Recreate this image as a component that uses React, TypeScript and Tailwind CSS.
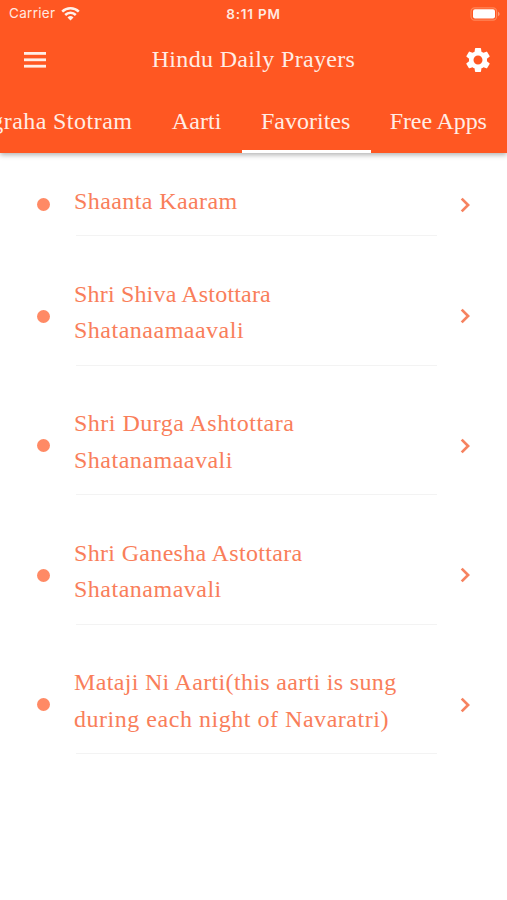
import React from "react";
import { MdSettings } from "react-icons/md";

const tabs = [
  { label: "Navagraha Stotram", tracking: "tracking-[0.5px] [word-spacing:-0.5px]", active: false },
  { label: "Aarti", tracking: "tracking-[0.1px]", active: false },
  { label: "Favorites", tracking: "tracking-[0px]", active: true },
  { label: "Free Apps", tracking: "tracking-[-0.1px]", active: false },
];

const prayers = [
  [{ text: "Shaanta Kaaram", tracking: "tracking-[0.4px]" }],
  [
    { text: "Shri Shiva Astottara", tracking: "tracking-[0.18px]" },
    { text: "Shatanaamaavali", tracking: "tracking-[0.5px]" },
  ],
  [
    { text: "Shri Durga Ashtottara", tracking: "tracking-[0.48px]" },
    { text: "Shatanamaavali", tracking: "tracking-[0.5px]" },
  ],
  [
    { text: "Shri Ganesha Astottara", tracking: "tracking-[0.33px]" },
    { text: "Shatanamavali", tracking: "tracking-[0.5px]" },
  ],
  [
    { text: "Mataji Ni Aarti(this aarti is sung", tracking: "tracking-[0.33px]" },
    { text: "during each night of Navaratri)", tracking: "tracking-[0.53px]" },
  ],
];

const StatusBar = () => {
  return (
    <div className="grid h-[28px] grid-cols-3 items-center pl-[9px] pr-[7px] font-['Inter',sans-serif] text-[#ffe9e0]">
      <div className="-mt-px flex items-center gap-[6px]">
        <span className="text-[13.5px] tracking-[0.3px]">Carrier</span>
        <svg width="19" height="14" viewBox="0 0 19 14" fill="none" stroke="#fff1ea" strokeWidth="2.5">
          <path d="M1.2 4.7a11.8 11.8 0 0 1 16.6 0" />
          <path d="M4.2 8a7.5 7.5 0 0 1 10.6 0" />
          <path d="M9.5 13.4 6.5 10.4a4.3 4.3 0 0 1 6 0Z" fill="#fff1ea" stroke="none" />
        </svg>
      </div>
      <span className="-ml-[2px] text-center text-[13.5px] font-semibold tracking-[0.8px]">8:11 PM</span>
      <svg className="-mt-px justify-self-end" width="30" height="14" viewBox="0 0 30 14">
        <rect x="1" y="0.8" width="25.6" height="12.4" rx="3.6" fill="none" stroke="#ff8659" strokeWidth="1.2" />
        <rect x="3" y="2.2" width="22" height="9.4" rx="2" fill="#fff" />
        <path d="M28 4.8v4.4c1-.4 1.6-1.2 1.6-2.2s-.6-1.8-1.6-2.2Z" fill="#ff9b79" />
      </svg>
    </div>
  );
};

const MenuIcon = () => {
  return (
    <svg width="22" height="16" viewBox="0 0 22 16" fill="#ffeee7">
      <rect y="0" width="22" height="2.8" />
      <rect y="6.4" width="22" height="2.8" />
      <rect y="12.8" width="22" height="2.8" />
    </svg>
  );
};

const ChevronIcon = () => {
  return (
    <svg
      className="-mt-px ml-auto shrink-0"
      width="30"
      height="30"
      viewBox="0 0 30 30"
      fill="none"
      stroke="#f6825f"
      strokeWidth="2.7"
    >
      <path d="M11.7 8.6 18.1 15l-6.4 6.4" />
    </svg>
  );
};

const App = () => {
  return (
    <div className="h-[900px] w-[507px] overflow-hidden bg-white font-['Liberation_Serif',serif] text-[24px]">
      <header className="h-[152.5px] bg-[#ff5722] text-[#ffede5] shadow-[0_2px_5px_rgba(0,0,0,0.3)]">
        <StatusBar />
        <div className="grid h-[63.5px] grid-cols-[1fr_auto_1fr] items-center pl-[24px] pr-[24px]">
          <MenuIcon />
          <h1 className="relative -top-px tracking-[0.33px]">Hindu Daily Prayers</h1>
          <MdSettings size={30} color="#ffffff" className="-mr-[9.5px] justify-self-end" />
        </div>
        <nav className="flex h-[61px] justify-end">
          {tabs.map((tab) => (
            <button
              key={tab.label}
              className={`flex shrink-0 items-center whitespace-nowrap border-b-[3px] pl-[19.2px] pr-[20.2px] ${tab.tracking} ${
                tab.active ? "border-white" : "border-transparent"
              }`}
            >
              {tab.label}
            </button>
          ))}
        </nav>
      </header>

      <ul className="flex flex-col gap-[31.5px] pt-[22.2px] text-[#f97e5a]">
        {prayers.map((lines) => (
          <li key={lines[0].text} className="flex items-center pl-[37px] pr-[27px]">
            <span className="-mt-px h-[13px] w-[13px] shrink-0 rounded-full bg-[#ff8a65]" />
            <div className="ml-[26px] w-[361px] border-b border-[#f3f3f3] pb-[16px] pt-[8px]">
              {lines.map((line) => (
                <p key={line.text} className={`-ml-[2px] whitespace-nowrap leading-[36.5px] ${line.tracking}`}>
                  {line.text}
                </p>
              ))}
            </div>
            <ChevronIcon />
          </li>
        ))}
      </ul>
    </div>
  );
};

export default App;
